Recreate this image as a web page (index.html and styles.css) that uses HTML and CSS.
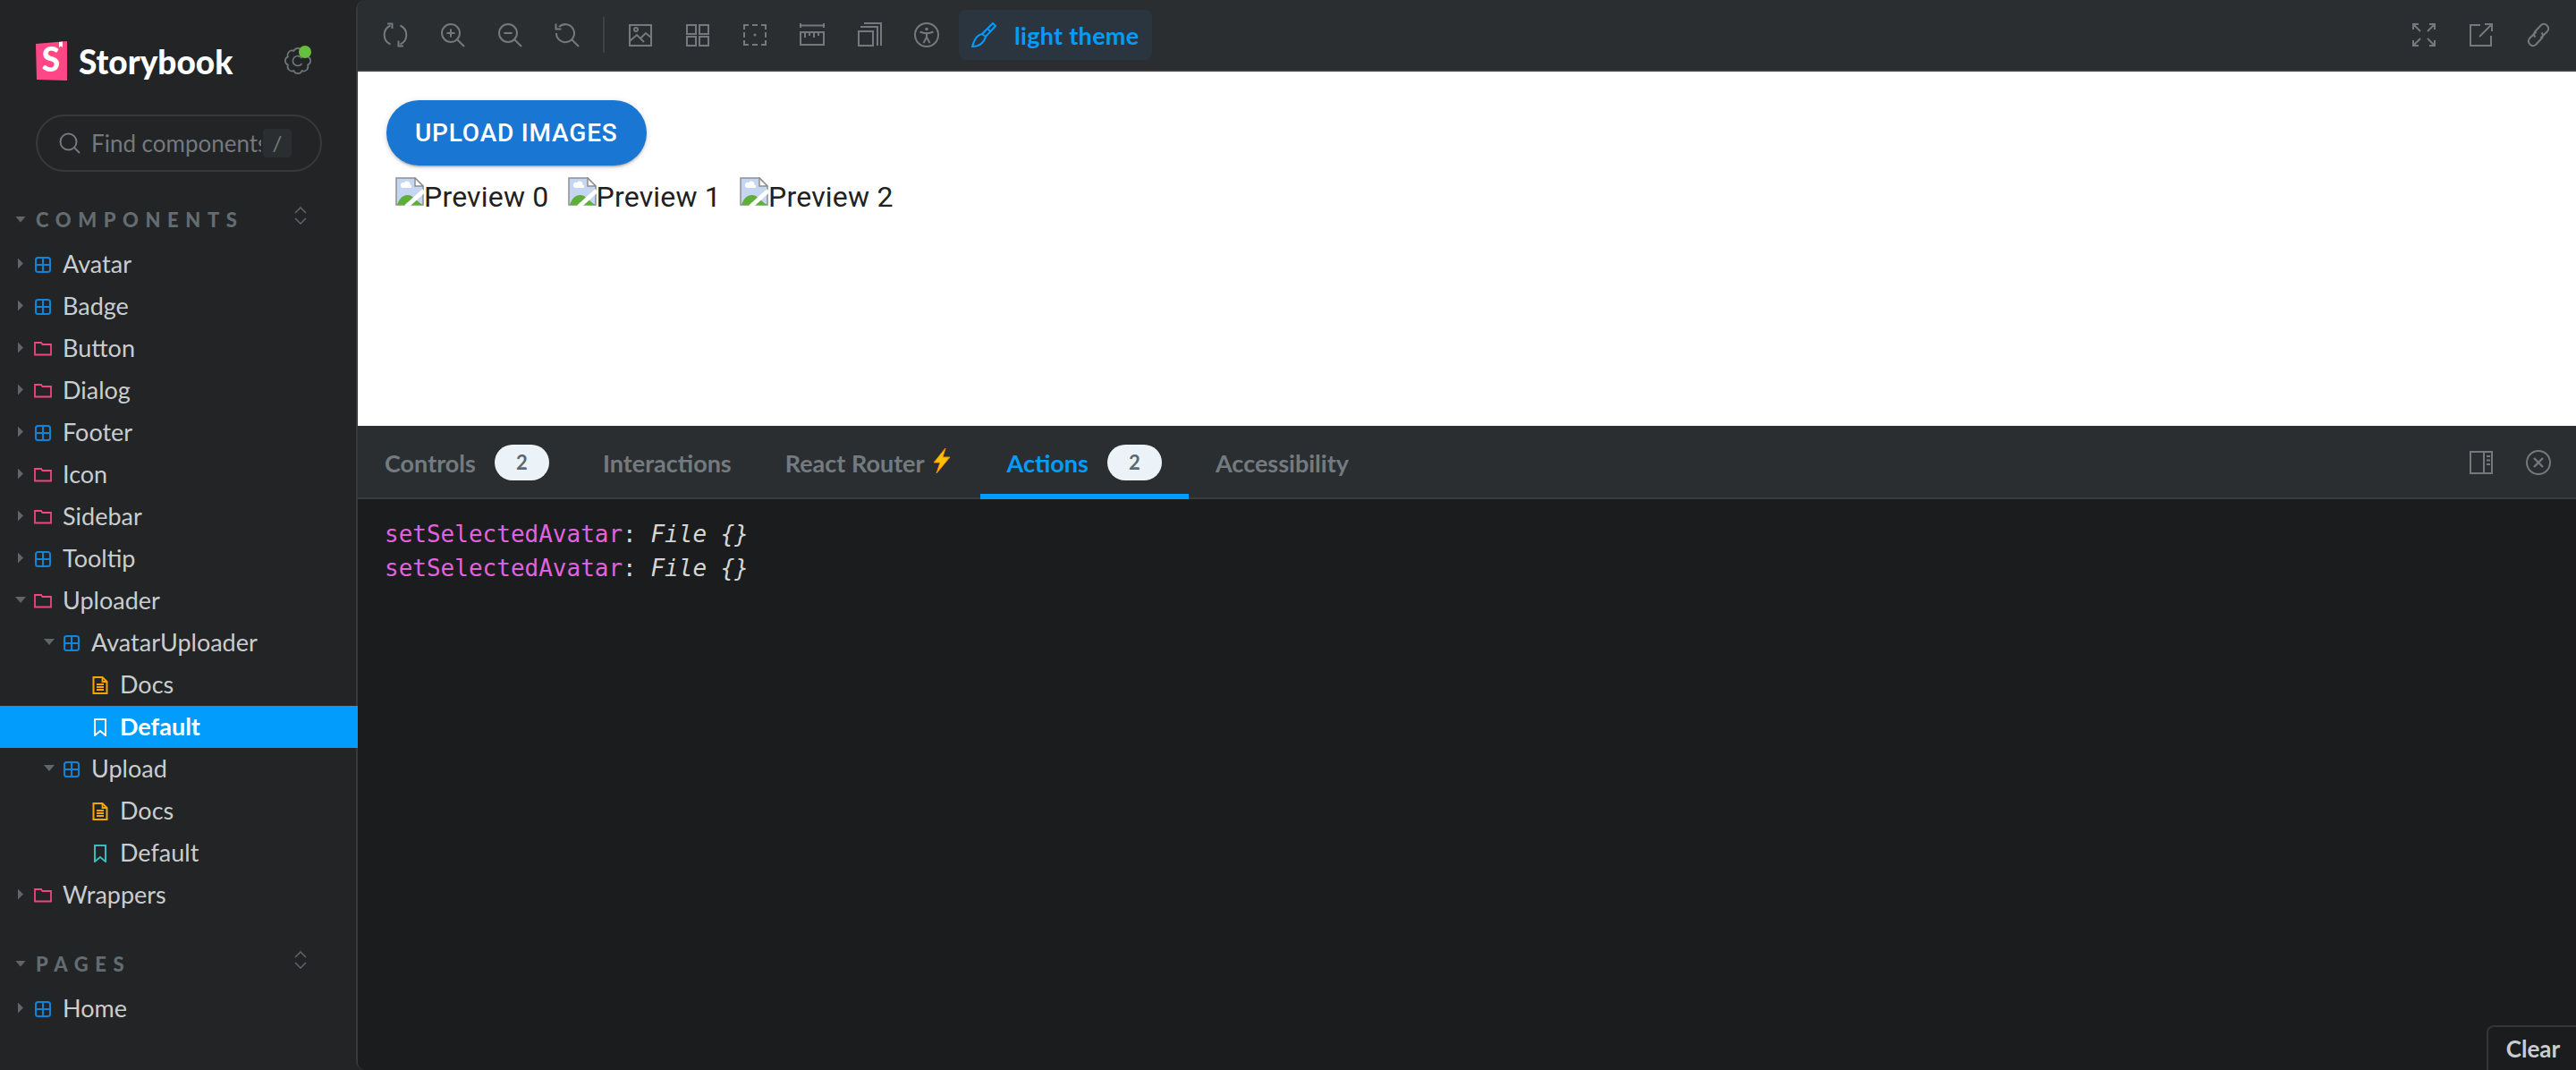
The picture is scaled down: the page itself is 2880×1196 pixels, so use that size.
FILE: index.html
```html
<!DOCTYPE html>
<html lang="en">
<head>
    <meta charset="UTF-8">
    <title>Storybook</title>
    <link rel="stylesheet" href="styles.css">
</head>
<body>
<svg class="defs" width="0" height="0">
    <symbol id="i-comp" viewBox="0 0 20 20">
        <rect x="2" y="2" width="16" height="16" rx="2.5" fill="none" stroke="currentColor" stroke-width="2"/>
        <path d="M10 2v16M2 10h16" fill="none" stroke="currentColor" stroke-width="2"/>
    </symbol>
    <symbol id="i-folder" viewBox="0 0 20 20">
        <path d="M1 3h7l1.5 2H19v11.500H1z" fill="none" stroke="currentColor" stroke-width="1.800"/>
    </symbol>
    <symbol id="i-doc" viewBox="0 0 20 20">
        <path d="M2.500 1h10l5 5v13h-15z" fill="none" stroke="currentColor" stroke-width="2"/>
        <path d="M12.500 1v5h5M6 9h8M6 12h8M6 15h8" fill="none" stroke="currentColor" stroke-width="1.800"/>
    </symbol>
    <symbol id="i-story" viewBox="0 0 20 20">
        <path d="M4 1h12v18l-6-5-6 5z" fill="none" stroke="currentColor" stroke-width="2"/>
    </symbol>
    <symbol id="i-sync" viewBox="0 0 28 28">
        <path d="M8.500 24.500A11.500 11.500 0 0 1 8.500 3.500M5 1.500h5.500V7M19.500 3.500a11.500 11.500 0 0 1 0 21M17.500 20.500v6H23"/>
    </symbol>
    <symbol id="i-zoomin" viewBox="0 0 28 28">
        <circle cx="12" cy="12" r="10"/><path d="M19.500 19.500L27 27M12 7.500v9M7.500 12h9"/>
    </symbol>
    <symbol id="i-zoomout" viewBox="0 0 28 28">
        <circle cx="12" cy="12" r="10"/><path d="M19.500 19.500L27 27M7.500 12h9"/>
    </symbol>
    <symbol id="i-zoomreset" viewBox="0 0 28 28">
        <path d="M5 5A10 10 0 1 1 2 12M19.500 19.500L27 27M1.500 1.500v6h6"/>
    </symbol>
    <symbol id="i-image" viewBox="0 0 28 28">
        <path d="M2 3h24v23H2zM2 21l8-7 8 8M14 18l6-6 6 5"/><circle cx="9" cy="8" r="2"/>
    </symbol>
    <symbol id="i-grid" viewBox="0 0 28 28">
        <path d="M2 3h10v10H2zM16 3h10v10H16zM2 16h10v10H2zM16 16h10v10H16z"/>
    </symbol>
    <symbol id="i-outline" viewBox="0 0 28 28">
        <path d="M2 8V3h5M21 3h5v5M26 20v5h-5M7 25H2v-5M2 11v6M26 11v6M11 3h6M11 25h6"/>
        <circle cx="14" cy="14" r="1.500" fill="currentColor" stroke="none"/>
    </symbol>
    <symbol id="i-measure" viewBox="0 0 28 28">
        <path d="M1 1v5M27 1v5M1 3.500h26M1 11h26v14H1zM6 11v6M11 11v4M16 11v6M21 11v4"/>
    </symbol>
    <symbol id="i-transparent" viewBox="0 0 28 28">
        <path d="M2 10h16v16H2zM4 5h19v21M8 1h19v25"/>
    </symbol>
    <symbol id="i-a11y" viewBox="0 0 28 28">
        <circle cx="14" cy="14" r="13"/><circle cx="14" cy="7.500" r="1.800" fill="currentColor" stroke="none"/>
        <path d="M6.500 10.500L11 12h6l4.500-1.500M14 12v5M14 16.500L10.500 23M14 16.500L17.500 23"/>
    </symbol>
    <symbol id="i-brush" viewBox="0 0 28 28">
        <path d="M24 1l3 3-11 12-4-3zM12 13c-5 1-8 4-11 14 4 0 12-1 15-11M18 7l3 3"/>
    </symbol>
    <symbol id="i-full" viewBox="0 0 28 28">
        <path d="M2 8V2h6M2 2l8 8M26 8V2h-6M26 2l-8 8M2 20v6h6M2 26l8-8M26 20v6h-6M26 26l-8-8"/>
    </symbol>
    <symbol id="i-share" viewBox="0 0 28 28">
        <path d="M13 3H2v23h23V15M12 16L25 3M18 2h8v8"/>
    </symbol>
    <symbol id="i-link" viewBox="0 0 28 28">
        <path d="M11.500 10.500L4 18a5 5 0 0 0 7 7l6.500-7a5 5 0 0 0 0-6.500M16.500 17.500L24 10a5 5 0 0 0-7-7l-6.500 7a5 5 0 0 0 0 6.500"/>
    </symbol>
    <symbol id="i-panel" viewBox="0 0 28 28">
        <path d="M2 2h24v24H2zM17 2v24"/>
        <path d="M20 7h4M20 11.500h4M20 16h4" stroke-width="2.200"/>
    </symbol>
    <symbol id="i-close" viewBox="0 0 28 28">
        <circle cx="14" cy="14" r="13"/><path d="M9 9l10 10M19 9L9 19" stroke-width="2.400"/>
    </symbol>
    <symbol id="i-chev" viewBox="0 0 14 20">
        <path d="M1 7l6-6 6 6M1 13l6 6 6-6" fill="none" stroke="currentColor" stroke-width="1.500"/>
    </symbol>
    <symbol id="i-broken" viewBox="0 0 32 32">
        <path d="M1 1h21l9 9v21H1z" fill="#c5d6f2" stroke="#8f8f8f" stroke-width="1.500"/>
        <path d="M22 1v9h9z" fill="#fff" stroke="#8f8f8f" stroke-width="1.500"/>
        <path d="M2 31c3-10 10-13 16-10l12 10z" fill="#5fae3c"/>
        <circle cx="9" cy="9" r="3" fill="#fff"/><circle cx="13" cy="8" r="3.500" fill="#fff"/><rect x="7" y="9" width="11" height="3" fill="#fff"/>
        <path d="M12 33L32 15" stroke="#fff" stroke-width="5"/>
    </symbol>
</svg>

<div class="app">
    <nav class="sidebar">
        <div class="brand">
            <svg class="logo" width="36" height="44" viewBox="0 0 36 44">
                <path d="M0 3L35 0v44L1 43z" fill="#ff4785"/>
                <path d="M26 1v6l2-1.500L30 7V.500z" fill="#fff"/>
                <text x="17" y="34" class="logo-s">S</text>
            </svg>
            <span class="brand-name">Storybook</span>
            <span class="gear">
                <svg width="30" height="30" viewBox="0 0 30 30" fill="none" stroke="#6f767b" stroke-width="1.700">
                    <path d="M26.100 10.400A5 5 0 0 1 26.100 19.600A5 5 0 0 1 19.600 26.100A5 5 0 0 1 10.400 26.100A5 5 0 0 1 3.900 19.600A5 5 0 0 1 3.900 10.400A5 5 0 0 1 10.400 3.900A5 5 0 0 1 19.600 3.900"/>
                    <path d="M19.500 12a5.500 5.500 0 1 0 0 6"/>
                </svg>
                <i class="gear-dot"></i>
            </span>
        </div>

        <div class="search">
            <svg width="24" height="24" viewBox="0 0 24 24" fill="none" stroke="#73797e" stroke-width="2">
                <circle cx="10.500" cy="10.500" r="9"/><path d="M17 17l6 6"/>
            </svg>
            <span class="search-text">Find components</span>
            <span class="search-key">/</span>
        </div>

        <div class="section-head">
            <i class="tri-down"></i>
            <span class="section-title">COMPONENTS</span>
            <svg class="chev" width="14" height="20"><use href="#i-chev"/></svg>
        </div>
        <ul class="tree">
            <li class="row"><i class="tri-right"></i><svg class="ic c-comp"><use href="#i-comp"/></svg>Avatar</li>
            <li class="row"><i class="tri-right"></i><svg class="ic c-comp"><use href="#i-comp"/></svg>Badge</li>
            <li class="row"><i class="tri-right"></i><svg class="ic c-folder"><use href="#i-folder"/></svg>Button</li>
            <li class="row"><i class="tri-right"></i><svg class="ic c-folder"><use href="#i-folder"/></svg>Dialog</li>
            <li class="row"><i class="tri-right"></i><svg class="ic c-comp"><use href="#i-comp"/></svg>Footer</li>
            <li class="row"><i class="tri-right"></i><svg class="ic c-folder"><use href="#i-folder"/></svg>Icon</li>
            <li class="row"><i class="tri-right"></i><svg class="ic c-folder"><use href="#i-folder"/></svg>Sidebar</li>
            <li class="row"><i class="tri-right"></i><svg class="ic c-comp"><use href="#i-comp"/></svg>Tooltip</li>
            <li class="row"><i class="tri-down"></i><svg class="ic c-folder"><use href="#i-folder"/></svg>Uploader</li>
            <li class="row lv1"><i class="tri-down"></i><svg class="ic c-comp"><use href="#i-comp"/></svg>AvatarUploader</li>
            <li class="row lv2"><i class="tri-none"></i><svg class="ic c-doc"><use href="#i-doc"/></svg>Docs</li>
            <li class="row lv2 selected"><i class="tri-none"></i><svg class="ic"><use href="#i-story"/></svg>Default</li>
            <li class="row lv1"><i class="tri-down"></i><svg class="ic c-comp"><use href="#i-comp"/></svg>Upload</li>
            <li class="row lv2"><i class="tri-none"></i><svg class="ic c-doc"><use href="#i-doc"/></svg>Docs</li>
            <li class="row lv2"><i class="tri-none"></i><svg class="ic c-story"><use href="#i-story"/></svg>Default</li>
            <li class="row"><i class="tri-right"></i><svg class="ic c-folder"><use href="#i-folder"/></svg>Wrappers</li>
        </ul>

        <div class="section-head">
            <i class="tri-down"></i>
            <span class="section-title">PAGES</span>
            <svg class="chev" width="14" height="20"><use href="#i-chev"/></svg>
        </div>
        <ul class="tree">
            <li class="row"><i class="tri-right"></i><svg class="ic c-comp"><use href="#i-comp"/></svg>Home</li>
        </ul>
    </nav>

    <main class="main">
        <div class="toolbar">
            <button class="tool"><svg><use href="#i-sync"/></svg></button>
            <button class="tool"><svg><use href="#i-zoomin"/></svg></button>
            <button class="tool"><svg><use href="#i-zoomout"/></svg></button>
            <button class="tool"><svg><use href="#i-zoomreset"/></svg></button>
            <span class="divider"></span>
            <button class="tool"><svg><use href="#i-image"/></svg></button>
            <button class="tool"><svg><use href="#i-grid"/></svg></button>
            <button class="tool"><svg><use href="#i-outline"/></svg></button>
            <button class="tool"><svg><use href="#i-measure"/></svg></button>
            <button class="tool"><svg><use href="#i-transparent"/></svg></button>
            <button class="tool"><svg><use href="#i-a11y"/></svg></button>
            <button class="theme"><svg><use href="#i-brush"/></svg>light theme</button>
            <span class="spacer"></span>
            <button class="tool"><svg><use href="#i-full"/></svg></button>
            <button class="tool"><svg><use href="#i-share"/></svg></button>
            <button class="tool"><svg><use href="#i-link"/></svg></button>
        </div>

        <section class="preview">
            <button class="upload">UPLOAD IMAGES</button>
            <div class="thumbs">
                <span class="thumb"><svg><use href="#i-broken"/></svg>Preview 0</span>
                <span class="thumb"><svg><use href="#i-broken"/></svg>Preview 1</span>
                <span class="thumb"><svg><use href="#i-broken"/></svg>Preview 2</span>
            </div>
        </section>

        <section class="panel">
            <div class="tabs">
                <div class="tab">Controls<span class="count">2</span></div>
                <div class="tab">Interactions</div>
                <div class="tab">React Router<svg class="bolt" width="20" height="28" viewBox="0 0 20 28"><path d="M14 0L1 16h7L4 28 19 10h-8z" fill="#ffc107" stroke="#f08a00" stroke-width="1"/></svg></div>
                <div class="tab active">Actions<span class="count">2</span></div>
                <div class="tab">Accessibility</div>
                <span class="spacer"></span>
                <button class="tool"><svg><use href="#i-panel"/></svg></button>
                <button class="tool"><svg><use href="#i-close"/></svg></button>
            </div>
            <div class="log">
                <div class="log-line"><span class="log-key">setSelectedAvatar</span>: <em>File {}</em></div>
                <div class="log-line"><span class="log-key">setSelectedAvatar</span>: <em>File {}</em></div>
            </div>
            <button class="clear">Clear</button>
        </section>
    </main>
</div>
</body>
</html>
```

FILE: styles.css
```css
*{
    margin:0;
    padding:0;
    box-sizing:border-box;
}
ul{
    list-style:none;
}
html,body{
    height:100%;
    overflow:hidden;
}
body{
    background:#222425;
    font-family:"Lato","Noto Sans",sans-serif;
    font-size:27px;
}
button{
    border:0;
    background:none;
    font-family:inherit;
}
.defs{
    position:absolute;
}
.app{
    display:flex;
    height:100vh;
}

/* sidebar */
.sidebar{
    width:398px;
    flex:none;
    background:#222425;
}
.brand{
    display:flex;
    align-items:center;
    height:44px;
    margin:46px 0 0 40px;
}
.logo{
    overflow:visible;
}
.logo-s{
    font-family:"Lato",sans-serif;
    font-weight:900;
    font-size:37px;
    fill:#fff;
    text-anchor:middle;
}
.brand-name{
    margin-left:12px;
    font-size:37px;
    font-weight:900;
    color:#fff;
}
.gear{
    position:relative;
    width:30px;
    height:30px;
    margin-left:58px;
}
.gear-dot{
    position:absolute;
    top:-2px;
    left:16px;
    width:14px;
    height:14px;
    border-radius:50%;
    background:#66bf3c;
}
.search{
    display:flex;
    align-items:center;
    height:64px;
    margin:38px 38px 0 40px;
    padding:0 7px 0 24px;
    border:2px solid #37393b;
    border-radius:32px;
    color:#73797e;
}
.search-text{
    width:190px;
    margin-left:12px;
    overflow:hidden;
    font-size:26px;
    white-space:nowrap;
}
.search-key{
    width:32px;
    height:32px;
    margin-left:2px;
    border-radius:4px;
    background:#2b2e30;
    font-size:24px;
    line-height:32px;
    text-align:center;
}
.section-head{
    display:flex;
    align-items:center;
    height:48px;
    margin-top:29px;
    padding-left:17px;
}
.section-title{
    margin-left:11px;
    font-size:22px;
    font-weight:900;
    letter-spacing:.345em;
    color:#636c73;
}
.chev{
    margin-left:auto;
    margin-right:55px;
    margin-top:-8px;
    color:#5f6569;
}
.tri-down,.tri-right,.tri-none{
    display:block;
    flex:none;
    width:12px;
}
.tri-down{
    height:7px;
    background:#5f6569;
    clip-path:polygon(0 0,100% 0,50% 100%);
}
.tri-right{
    height:12px;
    background:#5f6569;
    clip-path:polygon(25% 0,75% 50%,25% 100%);
}
.tree{
    margin-top:3px;
}
.row{
    display:flex;
    align-items:center;
    height:47px;
    padding-left:17px;
    padding-bottom:2px;
    color:#c9cdcf;
    white-space:nowrap;
}
.lv1{
    padding-left:49px;
}
.lv2{
    padding-left:81px;
}
.ic{
    width:20px;
    height:20px;
    flex:none;
    margin:2px 12px 0 9px;
}
.c-comp{
    color:#1184d8;
}
.c-folder{
    color:#f0457f;
}
.c-doc{
    color:#f5a40b;
}
.c-story{
    color:#37bdb8;
}
.selected{
    position:relative;
    z-index:1;
    margin-right:-2px;
    background:#029cfd;
    color:#fff;
    font-weight:700;
}

/* main area */
.main{
    flex:1;
    display:flex;
    flex-direction:column;
    min-width:0;
    border-left:2px solid #37393b;
    border-radius:10px 0 0 10px;
    overflow:hidden;
}
.toolbar{
    display:flex;
    align-items:center;
    flex:none;
    gap:8px;
    height:80px;
    padding:0 14px;
    background:#2b2e30;
    border-bottom:2px solid #3a3c3e;
}
.tool{
    display:flex;
    align-items:center;
    justify-content:center;
    width:56px;
    height:56px;
    flex:none;
}
.tool svg,.theme svg{
    width:28px;
    height:28px;
    fill:none;
    stroke:#73797e;
    stroke-width:2;
}
.tool svg{
    color:#73797e;
}
.divider{
    width:2px;
    height:40px;
    margin:0 4px;
    background:#3f4244;
}
.theme{
    display:flex;
    align-items:center;
    gap:20px;
    height:56px;
    padding:0 14px;
    border-radius:8px;
    background:#2b353f;
    color:#029cfd;
    font-size:27px;
    font-weight:700;
    letter-spacing:.3px;
}
.theme svg{
    stroke:#029cfd;
}
.spacer{
    flex:1;
}
.preview{
    flex:none;
    height:396px;
    padding:32px 32px 0;
    background:#fff;
    font-family:"Roboto",sans-serif;
}
.upload{
    display:block;
    height:73px;
    padding:0 32px;
    border-radius:37px;
    background:#1976d2;
    color:#fff;
    font-family:"Roboto",sans-serif;
    font-size:28px;
    font-weight:500;
    letter-spacing:.02857em;
    box-shadow:0 3px 2px -2px rgba(0,0,0,.2),0 2px 3px rgba(0,0,0,.14),0 1px 7px rgba(0,0,0,.12);
}
.thumbs{
    display:flex;
    margin-top:13px;
    font-size:32px;
    letter-spacing:.2px;
    color:#212121;
}
.thumb{
    display:flex;
    align-items:flex-end;
    margin:0 11px 0 10px;
    line-height:38px;
}
.thumb svg{
    width:32px;
    height:32px;
    margin-bottom:9px;
}
.panel{
    position:relative;
    flex:1;
    display:flex;
    flex-direction:column;
    background:#1b1c1d;
}
.tabs{
    display:flex;
    align-items:center;
    flex:none;
    gap:8px;
    height:82px;
    padding-right:14px;
    background:#2b2e30;
    box-shadow:inset 0 -2px 0 #3a3c3e;
}
.tab{
    display:flex;
    align-items:center;
    height:82px;
    padding:6px 30px 0;
    margin-right:-8px;
    border-bottom:6px solid transparent;
    color:#737b80;
    font-weight:700;
    white-space:nowrap;
}
.tab.active{
    border-bottom-color:#029cfd;
    color:#029cfd;
}
.count{
    width:61px;
    height:40px;
    margin-left:21px;
    border-radius:20px;
    background:#ecf3f8;
    color:#5c6870;
    font-size:22px;
    line-height:40px;
    text-align:center;
}
.bolt{
    margin:-4px 3px 0 9px;
}
.log{
    padding:20px 30px;
    font-family:"DejaVu Sans Mono",monospace;
    font-size:26px;
    color:#d5d5d5;
}
.log-line{
    line-height:38px;
}
.log-key{
    color:#e063dd;
}
.clear{
    position:absolute;
    right:0;
    bottom:0;
    width:100px;
    height:50px;
    padding-left:2px;
    border:2px solid #333537;
    border-width:2px 0 0 2px;
    border-radius:8px 0 0 0;
    color:#c9cdcf;
    font-size:26px;
    font-weight:700;
}
```
